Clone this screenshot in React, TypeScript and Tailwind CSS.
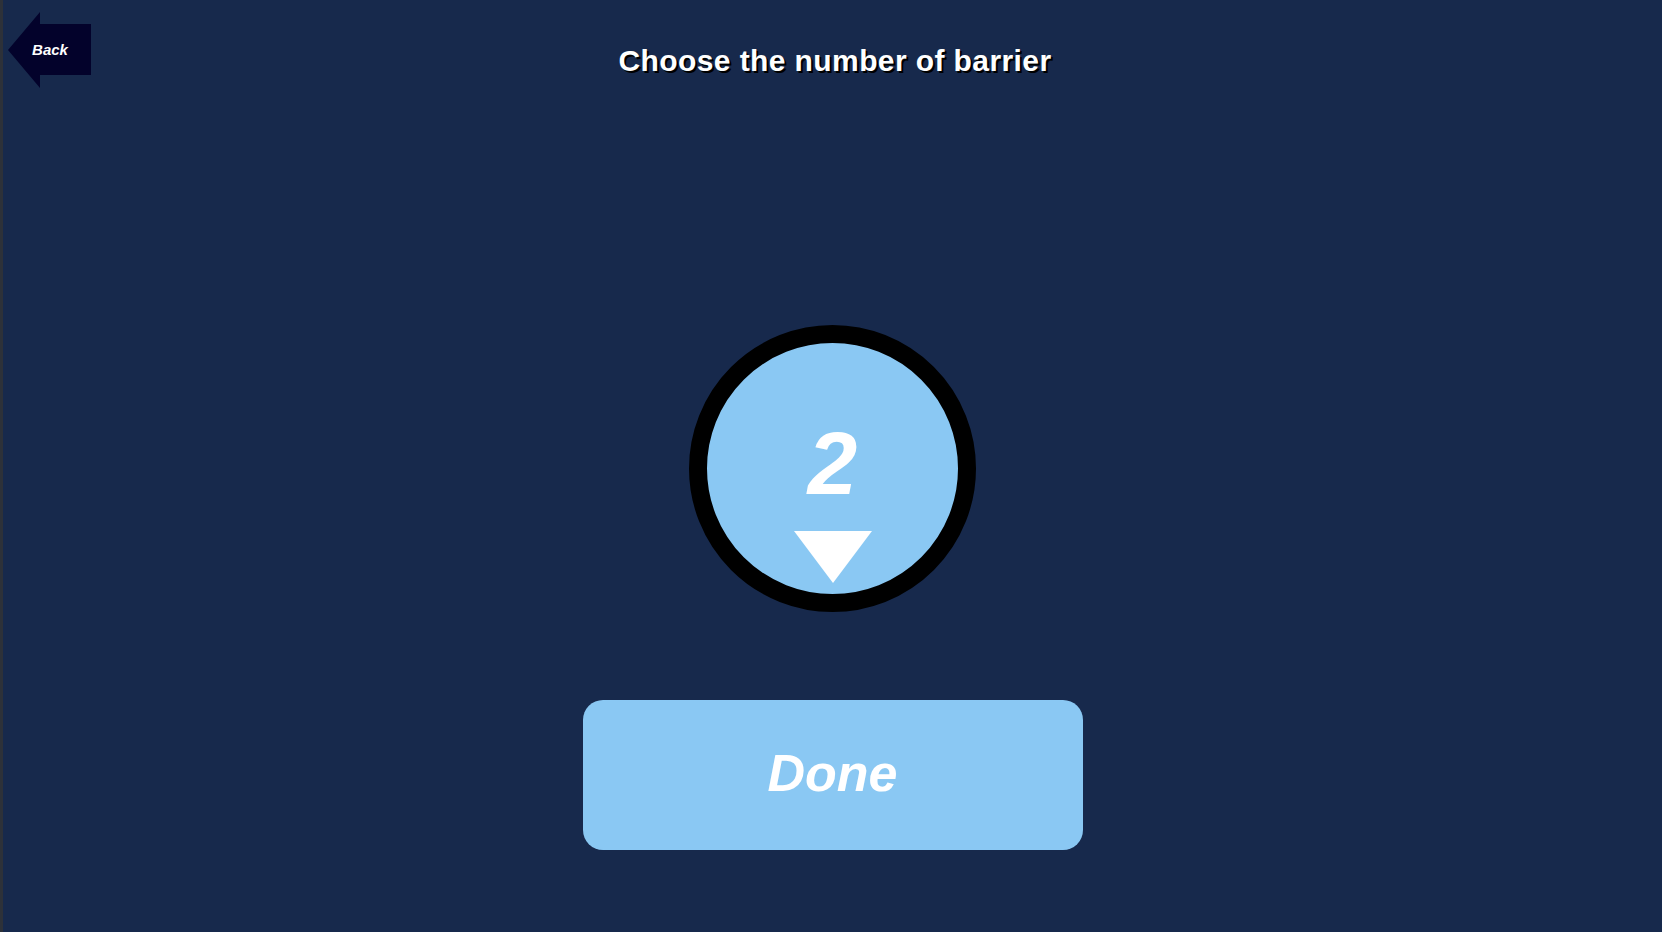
import React from 'react';

const FONT = { fontFamily: '"Liberation Sans", Arial, sans-serif' };

function BackButton() {
  return (
    <button className="relative w-[84px] h-[77px] flex items-center justify-center cursor-pointer">
      <svg className="absolute inset-0" width="84" height="77" viewBox="0 0 84 77">
        <polygon points="0,38 32,0 32,12 83,12 83,63 32,63 32,76" fill="#03022b" />
      </svg>
      <span className="relative text-[15px] font-bold italic text-white">Back</span>
    </button>
  );
}

function Picker({ value }: { value: number }) {
  return (
    <div className="w-[287px] h-[287px] rounded-full border-[18px] border-black bg-[#8ac8f3] flex flex-col items-center pt-[76px]">
      <div className="text-[89px] leading-[89px] font-bold italic text-white">{value}</div>
      <svg className="mt-[23px]" width="78" height="52" viewBox="0 0 78 52">
        <polygon points="0,0 78,0 39,52" fill="#ffffff" />
      </svg>
    </div>
  );
}

export default function App() {
  return (
    <div className="h-[932px] w-full flex bg-[#17294c] overflow-hidden" style={FONT}>
      <div className="w-[3px] shrink-0 bg-[#2d3139]" />
      <div className="flex-1 flex flex-col items-center">
        <div className="w-full grid grid-cols-[1fr_auto_1fr] items-start pt-[12px] pl-[5px]">
          <div><BackButton /></div>
          <h1 className="mt-[33px] text-[30px] leading-[32px] font-bold text-white tracking-[0.4px] [text-shadow:2px_2px_0_#000]">
            Choose the number of barrier
          </h1>
          <div />
        </div>
        <div className="mt-[236px]">
          <Picker value={2} />
        </div>
        <button className="mt-[88px] w-[500px] h-[150px] rounded-[20px] bg-[#8ac8f3] flex items-center justify-center pb-[5px]">
          <span className="text-[52px] font-bold italic text-white">Done</span>
        </button>
      </div>
    </div>
  );
}
